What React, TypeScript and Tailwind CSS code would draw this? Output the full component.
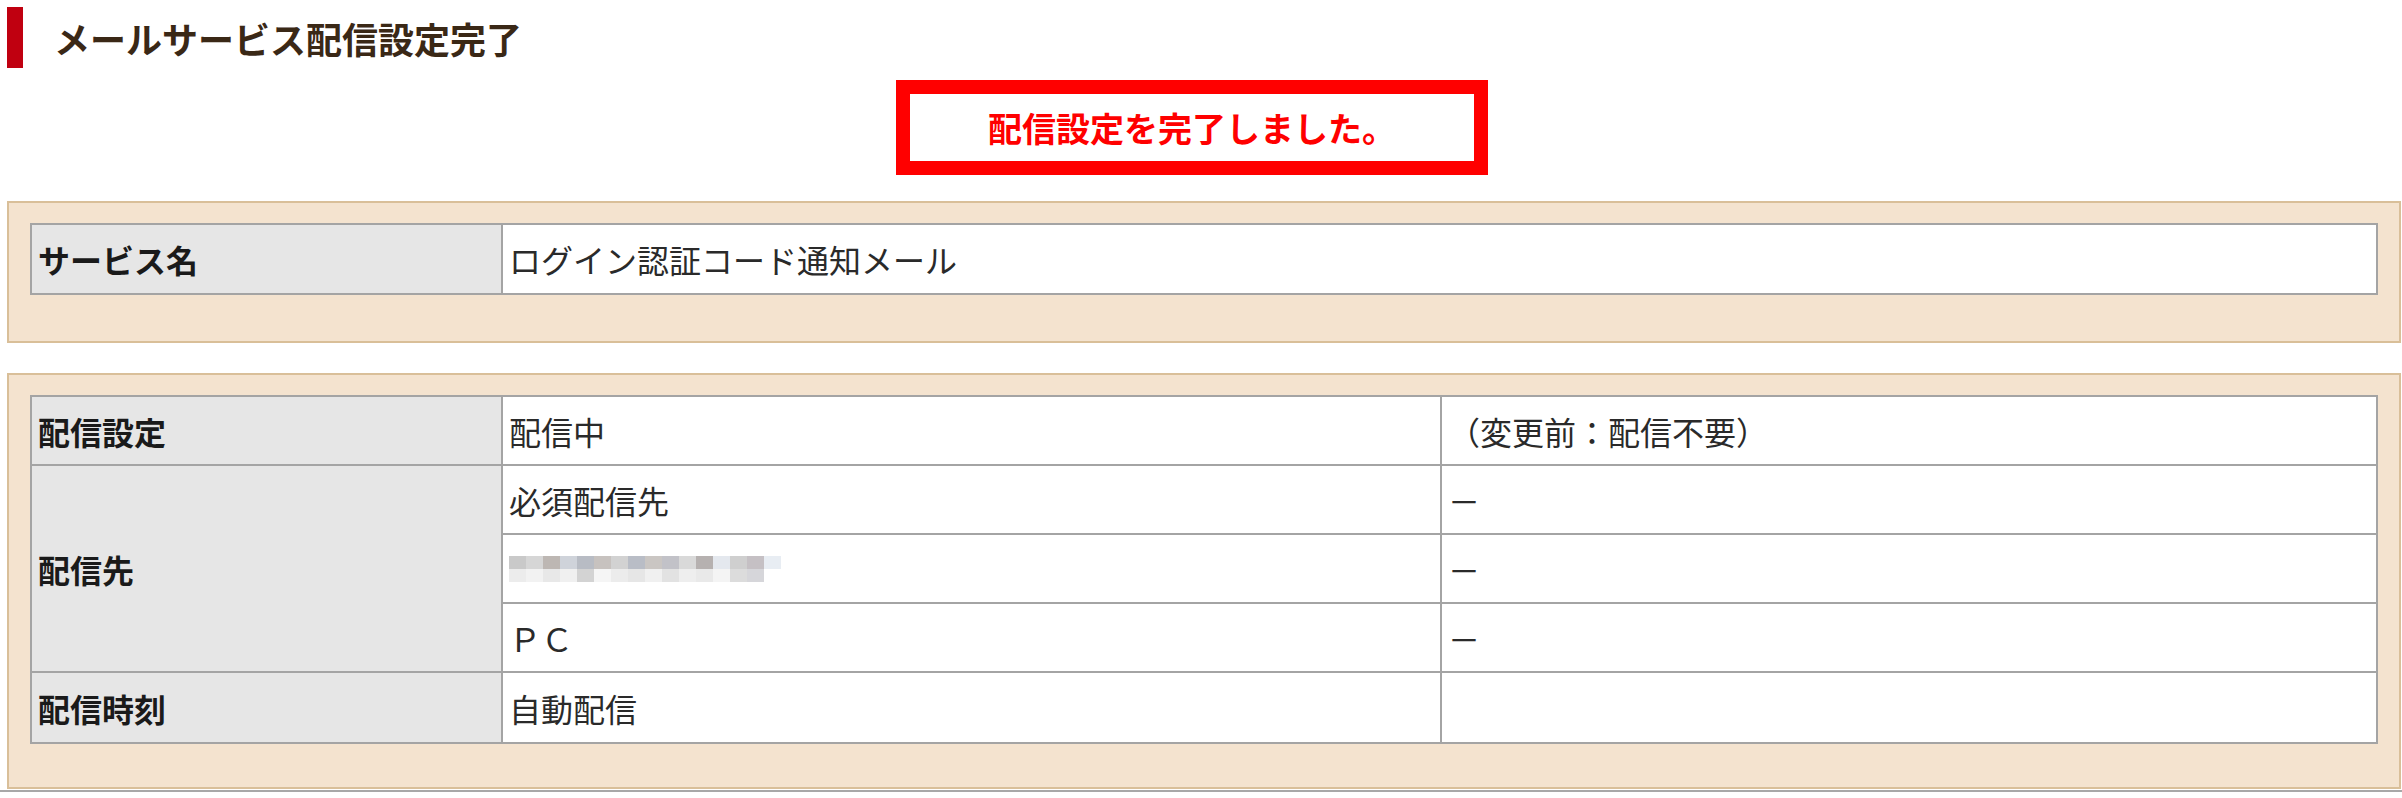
import React from "react";

// モザイク処理されたメールアドレス（ぼかしブロック）
const blurTop = [
  "bg-[#c9c9c9]", "bg-[#d6d6d6]", "bg-[#bdb7b3]", "bg-[#cfd3da]", "bg-[#b8bcc4]",
  "bg-[#c7c2bf]", "bg-[#d2d2d2]", "bg-[#b9bdc6]", "bg-[#cac6c3]", "bg-[#c2c2c8]",
  "bg-[#d9d9d9]", "bg-[#b6b1b0]", "bg-[#e4e8ee]", "bg-[#cfcfcf]", "bg-[#c5c0c4]",
  "bg-[#e8edf3]",
];
const blurBottom = [
  "bg-[#ececec]", "bg-[#f2f2f2]", "bg-[#e8e8e8]", "bg-[#f0f0f0]", "bg-[#d3d3d3]",
  "bg-[#f5f5f5]", "bg-[#ececec]", "bg-[#e6e6e6]", "bg-[#f0f0f0]", "bg-[#e2e2e2]",
  "bg-[#eeeeee]", "bg-[#e9e9e9]", "bg-[#f4f4f4]", "bg-[#dcdcdc]", "bg-[#d6d6da]",
  "bg-white",
];

function BlurredAddress() {
  return (
    <div className="flex flex-col">
      <div className="flex">
        {blurTop.map((c, i) => (
          <div key={i} className={`w-[17px] h-[13px] ${c}`} />
        ))}
      </div>
      <div className="flex">
        {blurBottom.map((c, i) => (
          <div key={i} className={`w-[17px] h-[13px] ${c}`} />
        ))}
      </div>
    </div>
  );
}

const th = "bg-[#e6e6e6] border-2 border-[#a4a4a4] px-[6px] text-left align-middle font-bold text-[#1a1a1a]";
const td = "bg-white border-2 border-[#a4a4a4] px-[6px] align-middle text-[#2a2a2a]";

export default function App() {
  return (
    <div className="min-h-screen bg-white font-['Noto_Sans_CJK_JP','Noto_Sans',sans-serif]">
      {/* 見出し */}
      <div className="flex items-center pt-[7px]">
        <div className="ml-[7px] w-[16px] h-[61px] bg-[#c00010]" />
        <h1 className="ml-[31px] text-[36px] leading-none font-bold text-[#3a2816]">
          メールサービス配信設定完了
        </h1>
      </div>

      {/* 完了メッセージ */}
      <div className="flex justify-center pr-[18px] mt-[12px]">
        <div className="w-[592px] h-[95px] border-[14px] border-[#ff0000] flex items-center justify-center">
          <p className="text-[34px] leading-none font-bold text-[#ff0000]">配信設定を完了しました。</p>
        </div>
      </div>

      {/* サービス名 */}
      <div className="ml-[7px] mr-[1px] mt-[26px] bg-[#f4e3cf] border-2 border-[#d9bf99] pt-[20px] pb-[46px] px-[21px]">
        <table className="w-full table-fixed border-collapse text-[32px] leading-none">
          <colgroup>
            <col className="w-[471px]" />
            <col />
          </colgroup>
          <tbody>
            <tr className="h-[70px]">
              <th className={th}>サービス名</th>
              <td className={td}>ログイン認証コード通知メール</td>
            </tr>
          </tbody>
        </table>
      </div>

      {/* 配信設定 */}
      <div className="ml-[7px] mr-[1px] mt-[30px] bg-[#f4e3cf] border-2 border-[#d9bf99] pt-[20px] pb-[43px] px-[21px]">
        <table className="w-full table-fixed border-collapse text-[32px] leading-none">
          <colgroup>
            <col className="w-[471px]" />
            <col className="w-[939px]" />
            <col />
          </colgroup>
          <tbody>
            <tr className="h-[69px]">
              <th className={th}>配信設定</th>
              <td className={td}>配信中</td>
              <td className={td}>（変更前：配信不要）</td>
            </tr>
            <tr className="h-[69px]">
              <th className={th} rowSpan={3}>配信先</th>
              <td className={td}>必須配信先</td>
              <td className={td}>－</td>
            </tr>
            <tr className="h-[69px]">
              <td className={td}>
                <BlurredAddress />
              </td>
              <td className={td}>－</td>
            </tr>
            <tr className="h-[69px]">
              <td className={td}>ＰＣ</td>
              <td className={td}>－</td>
            </tr>
            <tr className="h-[71px]">
              <th className={th}>配信時刻</th>
              <td className={td}>自動配信</td>
              <td className={td}></td>
            </tr>
          </tbody>
        </table>
      </div>
      <div className="mt-[1px] h-[2px] bg-[#a8a8a8]" />
    </div>
  );
}
